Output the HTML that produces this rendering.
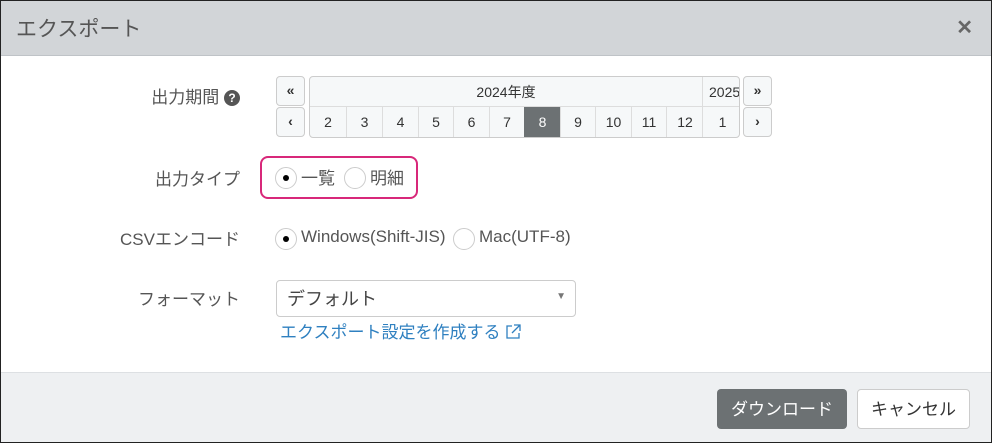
<!DOCTYPE html>
<html><head><meta charset="utf-8"><style>
*{box-sizing:border-box;margin:0;padding:0}
body{width:992px;height:443px;overflow:hidden;font-family:"Liberation Sans","Noto Sans CJK JP",sans-serif;background:#fff;position:relative;color:#333}
.frame{position:absolute;left:0;top:0;width:992px;height:443px;border:1px solid #222}
.hdr{position:absolute;left:1px;top:1px;width:990px;height:55px;background:#d2d5d8;border-bottom:1px solid #bfc3c7}
.hdr .t{position:absolute;left:15px;top:12px;font-size:21px;color:#555}
.hdr .x{position:absolute;right:18px;top:14px;font-size:20px;color:#666;font-weight:bold}
.lbl{position:absolute;right:752px;font-size:17px;color:#555;white-space:nowrap}
.a{position:absolute}
.btn{position:absolute;border:1px solid #ccc;border-radius:4px;background:#f6f8f9;font-size:14px;font-weight:bold;text-align:center;color:#333}
.cal{position:absolute;left:309px;top:76px;width:431px;height:62px;border:1px solid #ccc;border-radius:4px;background:#f6f8f9;overflow:hidden}
.cell{position:absolute;top:30px;height:31px;border-left:1px solid #ddd;font-size:14px;text-align:center;line-height:31px}
.radio{position:absolute;width:22px;height:22px;border:1px solid #ccc;border-radius:50%;background:#fff}
.radio.on::after{content:"";position:absolute;left:7px;top:7px;width:6px;height:6px;border-radius:50%;background:#000}
.rt{position:absolute;font-size:17px;color:#555}
.ftr{position:absolute;left:1px;top:372px;width:990px;height:70px;background:#eef0f2;border-top:1px solid #dde0e3}
</style></head><body>
<div class="hdr"><div class="t">エクスポート</div><div class="x">✕</div></div>
<div class="lbl" style="top:83px">出力期間 <span style="display:inline-block;width:16px;height:16px;border-radius:50%;background:#555;color:#fff;font-size:12px;text-align:center;line-height:16px;font-weight:bold;vertical-align:1px">?</span></div>
<div class="btn" style="left:276px;top:76px;width:29px;height:30px;line-height:27px">«</div>
<div class="btn" style="left:276px;top:107px;width:29px;height:30px;line-height:27px">‹</div>
<div class="btn" style="left:743px;top:76px;width:29px;height:30px;line-height:27px">»</div>
<div class="btn" style="left:743px;top:107px;width:29px;height:30px;line-height:27px">›</div>
<div class="cal">
<div class="a" style="left:0;top:0;width:392px;height:30px;border-bottom:1px solid #ddd;text-align:center;line-height:30px;font-size:14px">2024年度</div>
<div class="a" style="left:392px;top:0;width:40px;height:30px;border-left:1px solid #ddd;border-bottom:1px solid #ddd;line-height:30px;font-size:14px;padding-left:6px;overflow:hidden;white-space:nowrap">2025</div>
<div class="cell" style="left:-1px;width:37px">2</div>
<div class="cell" style="left:36px;width:36px">3</div>
<div class="cell" style="left:72px;width:36px">4</div>
<div class="cell" style="left:108px;width:35px">5</div>
<div class="cell" style="left:143px;width:36px">6</div>
<div class="cell" style="left:179px;width:35px">7</div>
<div class="cell" style="left:214px;width:36px;background:#6c7173;color:#fff;border-color:#6c7173">8</div>
<div class="cell" style="left:250px;width:35px">9</div>
<div class="cell" style="left:285px;width:36px">10</div>
<div class="cell" style="left:321px;width:35px">11</div>
<div class="cell" style="left:356px;width:37px">12</div>
<div class="cell" style="left:392px;width:40px">1</div>
</div>
<div class="lbl" style="top:165px">出力タイプ</div>
<div class="a" style="left:260px;top:156px;width:158px;height:43px;border:2px solid #d8287a;border-radius:8px"></div>
<div class="radio on" style="left:275px;top:167px"></div><div class="rt" style="left:301px;top:164px">一覧</div>
<div class="radio" style="left:344px;top:167px"></div><div class="rt" style="left:370px;top:164px">明細</div>
<div class="lbl" style="top:225px">CSVエンコード</div>
<div class="radio on" style="left:275px;top:228px"></div><div class="rt" style="left:301px;top:227px">Windows(Shift-JIS)</div>
<div class="radio" style="left:453px;top:228px"></div><div class="rt" style="left:479px;top:227px">Mac(UTF-8)</div>
<div class="lbl" style="top:285px">フォーマット</div>
<div class="a" style="left:276px;top:280px;width:300px;height:37px;border:1px solid #ccc;border-radius:4px;font-size:18px;color:#444;padding:4px 10px">デフォルト<span style="position:absolute;right:9px;top:10px;font-size:10px;color:#777">▼</span></div>
<div class="a" style="left:280px;top:318px;font-size:17px;color:#2f80c0">エクスポート設定を作成する <svg width="16" height="16" viewBox="0 0 16 16" style="vertical-align:-2px" fill="none" stroke="#2f80c0" stroke-width="1.3"><path d="M7 2H2v12h12V9M9 1h6v6M15 1L7 9"/></svg></div>
<div class="ftr"></div>
<div class="a" style="left:717px;top:389px;width:130px;height:40px;background:#6c7173;border-radius:4px;color:#fff;font-size:17px;text-align:center;line-height:41px">ダウンロード</div>
<div class="a" style="left:857px;top:389px;width:113px;height:40px;background:#fff;border:1px solid #ccc;border-radius:4px;color:#333;font-size:17px;text-align:center;line-height:39px">キャンセル</div>
<div class="frame"></div>
</body></html>
